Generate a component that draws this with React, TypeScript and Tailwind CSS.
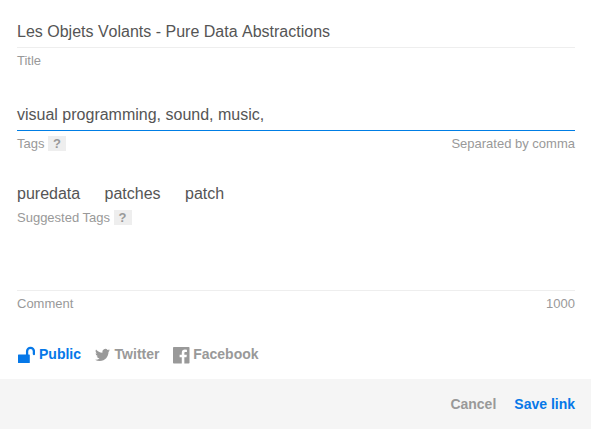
const Help = () => (
  <span className="ml-[3.5px] inline-block h-[15px] w-[18px] bg-[#eee] text-center font-bold leading-[15px]">?</span>
);

export default function App() {
  return (
    <div className="flex h-[429px] w-[591px] flex-col bg-white font-['Liberation_Sans',Arial,sans-serif] text-[13px] leading-[15px] text-[#999]">
      <main className="flex h-[379px] flex-col pl-[17px] pr-4">
        <section className="h-[83px] pt-[22px]">
          <div className="h-[26px] border-b border-[#eee] text-base leading-[19px] text-[#555] [font-kerning:none]">Les Objets Volants - Pure Data Abstractions</div>
          <div className="pt-[5px]">Title</div>
        </section>
        <section className="h-[101px] pt-[22px]">
          <div className="h-[26px] border-b border-[#007ee5] text-base leading-[19px] text-[#555]">visual programming, sound, music,</div>
          <div className="flex justify-between pt-[5px]"><div>Tags<Help /></div><div>Separated by comma</div></div>
        </section>
        <section className="h-[106px]">
          <div className="flex h-[26px] gap-[24.4px] text-base leading-[19px] text-[#555]"><span>puredata</span><span>patches</span><span>patch</span></div>
          <div>Suggested Tags<Help /></div>
        </section>
        <section className="flex h-[56px] justify-between border-t border-[#eee] pt-[5px]">
          <span>Comment</span><span>1000</span>
        </section>
        <div className="flex text-sm font-bold leading-4">
          <div className="flex w-[77.6px] text-[#0678e8]">
            <svg className="mr-1 h-[18px] w-[18px]" viewBox="0 0 18 18" fill="currentColor"><rect x="1" y="8.5" width="11.8" height="8.6" rx=".6" /><path d="M10.100 9V5.300a3.400 3.400 0 0 1 6.800 0v2.800" fill="none" stroke="currentColor" strokeWidth="2.3" strokeLinecap="round" /></svg>Public
          </div>
          <div className="flex w-[78.6px]"><svg className="ml-[.5px] mr-[4.5px] mt-px h-4 w-[15px]" viewBox="0 0 24 24" fill="currentColor"><path d="M23.95 4.57a10 10 0 0 1-2.82.77 4.96 4.96 0 0 0 2.16-2.72c-.95.55-2 .95-3.13 1.18a4.92 4.92 0 0 0-8.38 4.48C7.69 8.1 4.07 6.13 1.64 3.16a4.82 4.82 0 0 0-.67 2.48c0 1.71.87 3.21 2.19 4.1a4.9 4.9 0 0 1-2.23-.62v.06a4.92 4.92 0 0 0 3.95 4.83 5 5 0 0 1-2.21.08 4.94 4.94 0 0 0 4.6 3.42A9.87 9.87 0 0 1 0 19.54a13.99 13.99 0 0 0 7.55 2.21c9.06 0 14.01-7.5 14.01-13.98l-.02-.64a9.94 9.94 0 0 0 2.41-2.56z" /></svg>Twitter</div>
          <div className="flex"><svg className="mr-[3.5px] mt-px h-[16.5px] w-[16.5px]" viewBox="0 0 16 16" fill="currentColor"><path d="M.8 0h14.4q.8 0 .8.8v14.4q0 .8-.8.8H11v-6h2.1l.3-2.4H11V6c0-.7.2-1.2 1.2-1.2h1.3V2.6l-1.9-.1C9.700 2.500 8.500 3.600 8.500 5.700v1.900H6.400V10h2.100v6H.8q-.8 0-.8-.8V.8Q0 0 .8 0z" /></svg>Facebook</div>
        </div>
      </main>
      <footer className="flex h-[50px] items-center justify-end gap-[18px] bg-[#f5f5f5] pr-4 text-sm font-bold leading-4"><span>Cancel</span><span className="text-[#0678e8]">Save link</span></footer>
    </div>
  );
}
